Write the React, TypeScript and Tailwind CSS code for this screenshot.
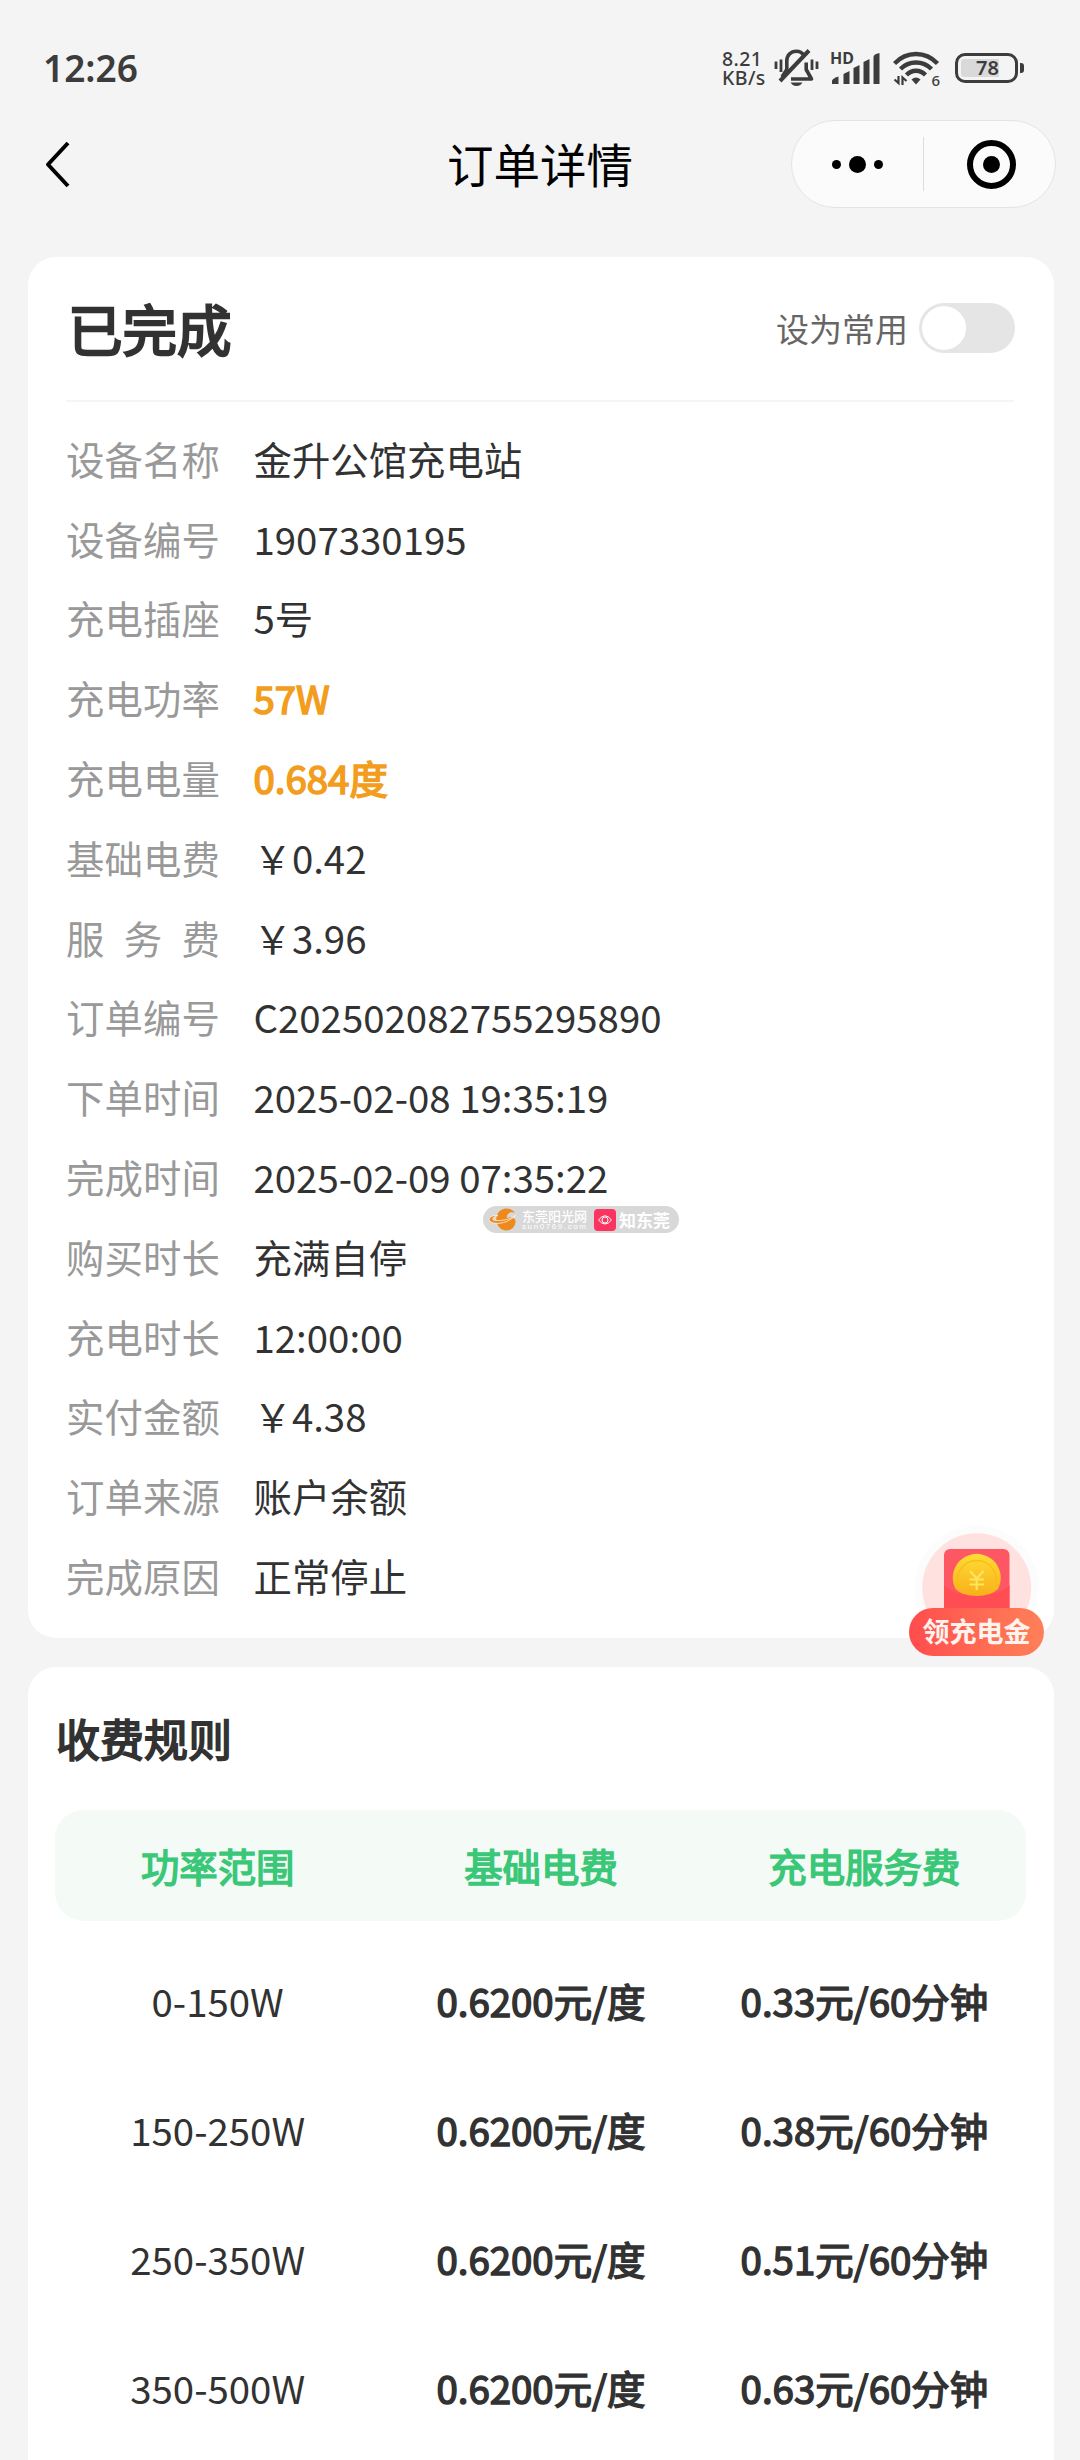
import { useState } from 'react'
import { Switch } from '@headlessui/react'

interface Field {
  label: string
  value: string
  highlight?: boolean
}

const FIELDS: Field[] = [
  { label: '设备名称', value: '金升公馆充电站' },
  { label: '设备编号', value: '1907330195' },
  { label: '充电插座', value: '5号' },
  { label: '充电功率', value: '57W', highlight: true },
  { label: '充电电量', value: '0.684度', highlight: true },
  { label: '基础电费', value: '￥0.42' },
  { label: '服务费', value: '￥3.96' },
  { label: '订单编号', value: 'C202502082755295890' },
  { label: '下单时间', value: '2025-02-08 19:35:19' },
  { label: '完成时间', value: '2025-02-09 07:35:22' },
  { label: '购买时长', value: '充满自停' },
  { label: '充电时长', value: '12:00:00' },
  { label: '实付金额', value: '￥4.38' },
  { label: '订单来源', value: '账户余额' },
  { label: '完成原因', value: '正常停止' },
]

const RULES = [
  { range: '0-150W', base: '0.6200元/度', service: '0.33元/60分钟' },
  { range: '150-250W', base: '0.6200元/度', service: '0.38元/60分钟' },
  { range: '250-350W', base: '0.6200元/度', service: '0.51元/60分钟' },
  { range: '350-500W', base: '0.6200元/度', service: '0.63元/60分钟' },
]

function MuteIcon() {
  return (
    <svg width="46" height="40" viewBox="0 0 46 40" fill="none" stroke="#3c3c3c" strokeWidth="3.6" className="shrink-0">
      <path d="M30 7.5C28 4.5 25.5 3.2 22.5 3.2C16.5 3.2 12.8 7.6 12.8 13V21.5L8 29" />
      <path d="M32.2 14.5V21.5L37.5 31H17" strokeLinejoin="round" />
      <path d="M35 2.5L6 33" strokeWidth="4" />
      <path d="M16.5 34.5H28.5C27 37 25 38 22.5 38C20 38 18 37 16.5 34.5Z" fill="#3c3c3c" stroke="none" />
      <path d="M2 13.5V21M7 11.5V24M38 11.5V22M43 13.5V21" strokeWidth="2.8" />
    </svg>
  )
}

function SignalIcon() {
  return (
    <div className="relative h-[34px] w-[50px] shrink-0">
      <svg width="50" height="34" viewBox="0 0 50 34" fill="#3c3c3c">
        <path d="M2 33V30Q2 27.5 8.5 25.5V33Z" />
        <path d="M13.5 33V23L19.5 20V33Z" />
        <path d="M23.5 33V17L29.5 14V33Z" />
        <path d="M33.5 33V11L39.5 8V33Z" />
        <path d="M43.5 33V6Q43.5 3 49.5 2V33Z" />
      </svg>
      <span className="absolute top-0 left-0 font-['Noto_Sans',sans-serif] text-[16px] leading-[14px] font-bold">HD</span>
    </div>
  )
}

function WifiIcon() {
  return (
    <div className="relative h-[36px] w-[47px] shrink-0">
      <svg width="47" height="36" viewBox="0 0 47 36" fill="none" stroke="#3c3c3c" strokeWidth="4.4">
        <path d="M1.5 13.5Q10.5 4 23 4Q35.5 4 44.5 13.5" />
        <path d="M7.5 19Q14 12.5 23 12.5Q32 12.5 38.5 19" />
        <path d="M13.5 25Q17.5 20.8 23 20.8Q28.5 20.8 32.5 25" />
        <path d="M18.5 29.5Q23 25.5 27.5 29.5L23 34.5Z" fill="#3c3c3c" stroke="none" />
        <path d="M5.5 26V33L1.5 29.5M9.5 35V27.5L13.5 31" strokeWidth="2.2" />
      </svg>
      <span className="absolute right-0 -bottom-[1px] font-['Noto_Sans',sans-serif] text-[15px] leading-[13px] font-medium">6</span>
    </div>
  )
}

function StatusBar() {
  return (
    <div className="flex h-[120px] items-start justify-between pl-[43px] pr-[56px] font-['Noto_Sans',sans-serif] text-[#3c3c3c]">
      <div className="mt-[43px] text-[37px] leading-[50px] font-semibold">12:26</div>
      <div className="mt-[48px] flex items-center">
        <div className="w-[43px] text-[19.5px] leading-[19.5px] font-medium tracking-[0.4px] whitespace-nowrap">
          8.21
          <br />
          KB/s
        </div>
        <div className="ml-[9px]"><MuteIcon /></div>
        <div className="ml-[10px]"><SignalIcon /></div>
        <div className="ml-[13px]"><WifiIcon /></div>
        <div className="ml-[15px] flex items-center gap-[2px]">
          <div className="flex h-[30px] w-[63px] items-center rounded-[10px] border-[3px] border-[#3c3c3c] p-[3px]">
            <div className="flex h-full w-full items-center justify-center rounded-[3px] bg-linear-to-r from-[#d9d9d9] from-75% to-transparent to-75% pl-[2px] text-[20px] font-semibold">
              78
            </div>
          </div>
          <div className="h-[10px] w-[4px] rounded-r-[3px] bg-[#3c3c3c]" />
        </div>
      </div>
    </div>
  )
}

function NavBar() {
  return (
    <header className="grid h-[88px] grid-cols-[1fr_auto_1fr] items-center pl-[44px] pr-[24px]">
      <button type="button" aria-label="返回">
        <svg width="28" height="48" viewBox="0 0 28 48" fill="none" stroke="#000" strokeWidth="4" strokeLinejoin="round">
          <path d="M24 3L4 24.5L24 46" />
        </svg>
      </button>
      <h1 className="-ml-[20px] pb-[2px] text-[46.5px] leading-[60px] text-black">订单详情</h1>
      <div className="flex h-[88px] w-[265px] items-center justify-self-end rounded-full border border-[#e4e4e4] bg-[#fbfbfb]">
        <button type="button" aria-label="更多" className="flex h-full w-[131px] items-center justify-center gap-[8px]">
          <span className="h-[9px] w-[9px] rounded-full bg-black" />
          <span className="h-[17px] w-[17px] rounded-full bg-black" />
          <span className="h-[9px] w-[9px] rounded-full bg-black" />
        </button>
        <span className="h-[54px] w-px bg-[#dcdcdc]" />
        <button type="button" aria-label="关闭" className="flex h-full flex-1 items-center justify-center pl-[4px]">
          <span className="flex h-[49px] w-[49px] items-center justify-center rounded-full border-[6px] border-black">
            <span className="h-[17px] w-[17px] rounded-full bg-black" />
          </span>
        </button>
      </div>
    </header>
  )
}

function SourceTag() {
  return (
    <div className="absolute top-[1206px] left-[483px] flex h-[27px] w-[196px] items-center rounded-full bg-[#d8d8d8] pl-[4px] text-white">
      <svg width="32" height="25" viewBox="0 0 32 25">
        <path d="M28 6C24 0 15 0 11 6C7 12 10 22 18 23.500C24 24 28 20 28.500 15C29 11 24 9 20 11C19 7 23 4 28 6Z" fill="#ee8a1d" />
        <path d="M11 8.500C5 8 1 10.500 2.500 13.500C5 18 19 18 28.500 8.500C22 13 12 14.500 6.500 13C4.500 12 7 9.500 11 8.500Z" fill="#ee8a1d" stroke="#fff" strokeWidth="0.700" />
      </svg>
      <div className="ml-[3px] w-[67px] whitespace-nowrap">
        <div className="text-[13px] leading-[14px] font-medium">东莞阳光网</div>
        <div className="font-['Liberation_Sans',sans-serif] text-[8px] leading-[8px] tracking-[1.6px]">sun0769.com</div>
      </div>
      <svg width="22" height="22" viewBox="0 0 22 22" className="ml-[5px]" fill="none" stroke="#fff">
        <rect width="22" height="22" rx="4" fill="#fb3360" stroke="none" />
        <path d="M4.500 11Q11 2.500 17.500 11Q11 19 4.500 11Z" />
        <circle cx="11" cy="11" r="3" />
      </svg>
      <div className="ml-[3px] text-[17px] leading-[22px] font-bold">知东莞</div>
    </div>
  )
}

function CreditBadge() {
  return (
    <button type="button" className="absolute top-[1525px] left-[909px] h-[131px] w-[135px]">
      <svg width="135" height="131" viewBox="0 0 135 131" className="absolute inset-0">
        <defs>
          <linearGradient id="coin" x1="0" y1="0" x2="0" y2="1">
            <stop offset="0" stopColor="#ffdc35" />
            <stop offset="1" stopColor="#f7b01a" />
          </linearGradient>
        </defs>
        <circle cx="67.700" cy="62.700" r="62" fill="#fcfcfd" />
        <circle cx="67.700" cy="62.700" r="54.500" fill="#ffe2e0" />
        <rect x="35" y="24" width="65.500" height="70" rx="6" fill="#fc5763" />
        <path d="M35 60Q43 70 67.700 70Q92 70 100.500 60V94H35Z" fill="#ff4d53" />
        <path d="M46.500 64A24 24 0 1 1 89 64Q82 71 67.700 71Q53 71 46.500 64Z" fill="url(#coin)" />
        <path d="M50.500 64A19.500 19.500 0 1 1 85 64" fill="none" stroke="#fbbd18" strokeWidth="1.500" />
        <path d="M61 46L67.700 53.500L74.500 46M67.700 53.500V65M60.500 54.500H75M60.500 59.500H75" fill="none" stroke="#ffe45c" strokeWidth="2.200" />
      </svg>
      <span className="absolute right-0 bottom-0 left-0 flex h-[48px] items-center justify-center rounded-full bg-linear-to-r from-[#ff4b4d] to-[#ff8059] pb-[2px] text-[27px] font-bold text-[#fff3ee]">
        领充电金
      </span>
    </button>
  )
}

export default function App() {
  const [favorite, setFavorite] = useState(false)

  return (
    <div className="relative h-[2460px] w-[1080px] overflow-hidden bg-[#f4f4f4] font-['Noto_Sans_CJK_SC',sans-serif] text-[#323232]">
      <StatusBar />
      <NavBar />

      <main className="mt-[49px] flex flex-col gap-[29px] pr-[26px] pl-[28px]">
        <section className="h-[1381px] rounded-[28px] bg-white pr-[40px] pl-[38px]">
          <div className="flex h-[145px] items-center justify-between border-b-2 border-[#f5f5f5]">
            <h2 className="pb-[2px] pl-[2px] text-[54.5px] leading-[70px] [-webkit-text-stroke:2.4px]">已完成</h2>
            <div className="-mr-[1px] flex items-center gap-[11px] pb-[1px]">
              <span className="pb-[1px] text-[33px] leading-[46px] text-[#666]">设为常用</span>
              <Switch
                checked={favorite}
                onChange={setFavorite}
                className="flex h-[50px] w-[96px] items-center rounded-full bg-[#e5e5e5] px-[3px] data-checked:justify-end data-checked:bg-[#3ac777]"
              >
                <span className="h-[44px] w-[44px] rounded-full bg-white" />
              </Switch>
            </div>
          </div>

          <dl className="mt-[16px]">
            {FIELDS.map((field) => (
              <div key={field.label} className="flex h-[79.8px] items-center text-[38.4px] leading-[54px]">
                <dt className="flex w-[154px] justify-between text-[#999]">
                  {field.label.split('').map((char, i) => (
                    <span key={i}>{char}</span>
                  ))}
                </dt>
                <dd className={`ml-[33.5px] ${field.highlight ? 'text-[#f29d1d] [-webkit-text-stroke:1.6px]' : ''}`}>
                  {field.value}
                </dd>
              </div>
            ))}
          </dl>
        </section>

        <section className="h-[900px] rounded-[28px] bg-white pr-[28px] pl-[27px]">
          <h2 className="pt-[39px] pl-[1px] text-[44px] leading-[64px] [-webkit-text-stroke:1.8px]">收费规则</h2>
          <div className="mt-[40px] grid h-[111px] grid-cols-3 items-center rounded-[28px] bg-[#f4fbf7] pl-px text-center text-[38.4px] text-[#3ac777] [-webkit-text-stroke:1.5px]">
            <span>功率范围</span>
            <span>基础电费</span>
            <span>充电服务费</span>
          </div>
          <div className="mt-[15px] pl-px">
            {RULES.map((rule) => (
              <div key={rule.range} className="grid h-[129px] grid-cols-3 items-center text-center text-[38.4px]">
                <span>{rule.range}</span>
                <span className="[-webkit-text-stroke:1.5px]">{rule.base}</span>
                <span className="[-webkit-text-stroke:1.5px]">{rule.service}</span>
              </div>
            ))}
          </div>
        </section>
      </main>

      <SourceTag />
      <CreditBadge />
    </div>
  )
}
